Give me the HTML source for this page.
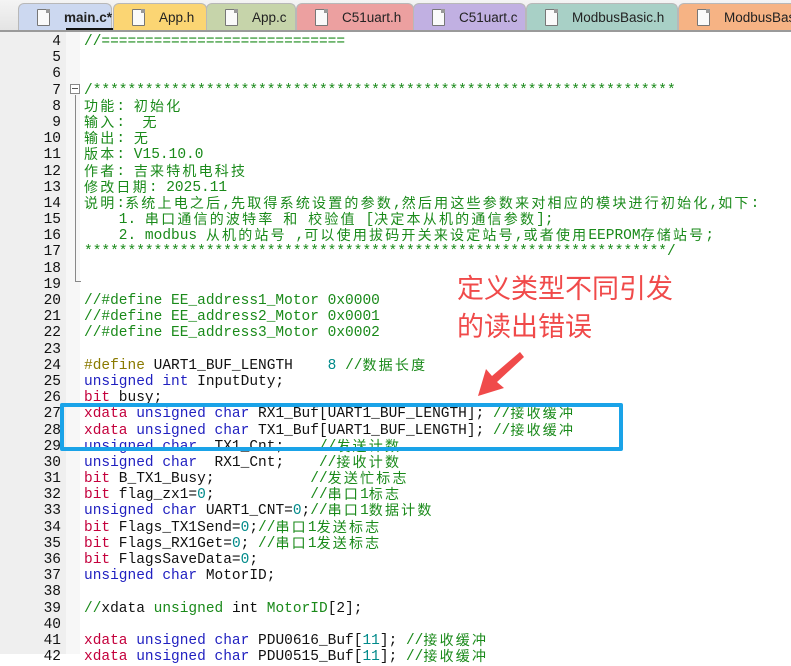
<!DOCTYPE html>
<html><head><meta charset="utf-8">
<style>
*{margin:0;padding:0;box-sizing:border-box}
body{width:791px;height:654px;overflow:hidden;background:#fff;position:relative;font-family:"Liberation Mono","Noto Sans CJK SC",monospace}
#tabs{position:absolute;left:0;top:0;width:791px;height:32px;background:linear-gradient(#f4f4f4,#e4e4e4);border-bottom:2px solid #9a9a9a}
.tab{position:absolute;top:3px;height:27px;border-radius:6px 6px 0 0;font-family:"Liberation Sans",sans-serif;font-size:13.5px;color:#222;line-height:27px;padding-left:45px;border:1px solid #b8b8b8;border-bottom:none}
.tab .ic{position:absolute;left:18px;top:5px;width:13px;height:17px;background:#fafafa;border:1px solid #777;border-radius:1px}
.tab .ic:after{content:"";position:absolute;right:-1px;top:-1px;width:4px;height:4px;background:#999}
#gut{position:absolute;left:0;top:32px;width:66px;height:622px;background:#efefef}
#fold{position:absolute;left:66px;top:32px;width:14px;height:622px;background:#f7f7f7}
#nums{position:absolute;left:0;top:34px;width:61px;text-align:right;font-size:14.5px;color:#111}
#code{position:absolute;left:84px;top:34px;font-size:14.5px;color:#111}
#nums div,#code div{height:16.2px;line-height:16px;white-space:pre;overflow:visible}
.g{color:#1a8a1a}.k{color:#1f1fc0}.r{color:#c4003c}.d{color:#8a7a00}.n{color:#008a8a}
i{font-style:normal;font-family:"Noto Sans CJK SC",sans-serif;font-size:14px;letter-spacing:2.2px;line-height:14px;vertical-align:-1px}
#box{position:absolute;left:60px;top:403px;width:563px;height:48px;border:4px solid #1aa3e8;border-radius:2px}
#note{position:absolute;left:457px;top:268px;font-family:"Noto Sans CJK SC",sans-serif;font-size:27px;line-height:38px;color:#f04a4a}
</style></head><body>
<div id="tabs">
<div class="tab" style="left:18px;width:94px;background:#ccd8f0;font-weight:bold"><span class="ic"></span>main.c*<div style="position:absolute;left:47px;top:24px;width:58px;height:2px;background:#111"></div></div>
<div class="tab" style="left:113px;width:94px;background:#fbd573"><span class="ic"></span>App.h</div>
<div class="tab" style="left:206px;width:90px;background:#c6d4aa"><span class="ic"></span>App.c</div>
<div class="tab" style="left:296px;width:118px;background:#eca0a0"><span class="ic"></span>C51uart.h</div>
<div class="tab" style="left:413px;width:113px;background:#c1b0e2"><span class="ic"></span>C51uart.c</div>
<div class="tab" style="left:526px;width:152px;background:#a8d0c6"><span class="ic"></span>ModbusBasic.h</div>
<div class="tab" style="left:678px;width:120px;background:#f6b384"><span class="ic"></span>ModbusBas</div>
</div>
<div id="gut"></div><div id="fold"></div>
<div style="position:absolute;left:70px;top:84px;width:10px;height:10px;border:1px solid #888;background:#fff"></div>
<div style="position:absolute;left:72px;top:88px;width:6px;height:1px;background:#555"></div>
<div style="position:absolute;left:75px;top:95px;width:1px;height:187px;background:#888"></div>
<div style="position:absolute;left:75px;top:281px;width:6px;height:1px;background:#888"></div>

<div id="nums"><div>4</div><div>5</div><div>6</div><div>7</div><div>8</div><div>9</div><div>10</div><div>11</div><div>12</div><div>13</div><div>14</div><div>15</div><div>16</div><div>17</div><div>18</div><div>19</div><div>20</div><div>21</div><div>22</div><div>23</div><div>24</div><div>25</div><div>26</div><div>27</div><div>28</div><div>29</div><div>30</div><div>31</div><div>32</div><div>33</div><div>34</div><div>35</div><div>36</div><div>37</div><div>38</div><div>39</div><div>40</div><div>41</div><div>42</div></div>

<div id="code">
<div class="g">//============================</div>
<div> </div>
<div> </div>
<div class="g">/*******************************************************************</div>
<div class="g"><i>功能</i>: <i>初始化</i></div>
<div class="g"><i>输入</i>:  <i>无</i></div>
<div class="g"><i>输出</i>: <i>无</i></div>
<div class="g"><i>版本</i>: V15.10.0</div>
<div class="g"><i>作者</i>: <i>吉来特机电科技</i></div>
<div class="g"><i>修改日期</i>: 2025.11</div>
<div class="g"><i>说明</i>:<i>系统上电之后</i>,<i>先取得系统设置的参数</i>,<i>然后用这些参数来对相应的模块进行初始化</i>,<i>如下</i>:</div>
<div class="g">    1. <i>串口通信的波特率</i> <i>和</i> <i>校验值</i> [<i>决定本从机的通信参数</i>];</div>
<div class="g">    2. modbus <i>从机的站号</i> ,<i>可以使用拔码开关来设定站号</i>,<i>或者使用</i>EEPROM<i>存储站号</i>;</div>
<div class="g">*******************************************************************/</div>
<div> </div>
<div> </div>
<div class="g">//#define EE_address1_Motor 0x0000</div>
<div class="g">//#define EE_address2_Motor 0x0001</div>
<div class="g">//#define EE_address3_Motor 0x0002</div>
<div> </div>
<div><span class="d">#define</span> UART1_BUF_LENGTH    <span class="n">8</span> <span class="g">//<i>数据长度</i></span></div>
<div><span class="k">unsigned int</span> InputDuty;</div>
<div><span class="r">bit</span> busy;</div>
<div><span class="r">xdata</span> <span class="k">unsigned char</span> RX1_Buf[UART1_BUF_LENGTH]; <span class="g">//<i>接收缓冲</i></span></div>
<div><span class="r">xdata</span> <span class="k">unsigned char</span> TX1_Buf[UART1_BUF_LENGTH]; <span class="g">//<i>接收缓冲</i></span></div>
<div><span class="k">unsigned char</span>  TX1_Cnt;    <span class="g">//<i>发送计数</i></span></div>
<div><span class="k">unsigned char</span>  RX1_Cnt;    <span class="g">//<i>接收计数</i></span></div>
<div><span class="r">bit</span> B_TX1_Busy;           <span class="g">//<i>发送忙标志</i></span></div>
<div><span class="r">bit</span> flag_zx1=<span class="n">0</span>;           <span class="g">//<i>串口</i>1<i>标志</i></span></div>
<div><span class="k">unsigned char</span> UART1_CNT=<span class="n">0</span>;<span class="g">//<i>串口</i>1<i>数据计数</i></span></div>
<div><span class="r">bit</span> Flags_TX1Send=<span class="n">0</span>;<span class="g">//<i>串口</i>1<i>发送标志</i></span></div>
<div><span class="r">bit</span> Flags_RX1Get=<span class="n">0</span>; <span class="g">//<i>串口</i>1<i>发送标志</i></span></div>
<div><span class="r">bit</span> FlagsSaveData=<span class="n">0</span>;</div>
<div><span class="k">unsigned char</span> MotorID;</div>
<div> </div>
<div><span class="g">//</span>xdata <span class="g">unsigned</span> int <span class="g">MotorID</span>[2];</div>
<div> </div>
<div><span class="r">xdata</span> <span class="k">unsigned char</span> PDU0616_Buf[<span class="n">11</span>]; <span class="g">//<i>接收缓冲</i></span></div>
<div><span class="r">xdata</span> <span class="k">unsigned char</span> PDU0515_Buf[<span class="n">11</span>]; <span class="g">//<i>接收缓冲</i></span></div>
</div>

<div id="box"></div>
<div id="note">定义类型不同引发<br>的读出错误</div>
<svg style="position:absolute;left:0;top:0" width="791" height="654">
<path d="M520 352 L492 376 L486 369 L478 396 L504 388 L497 382 L524 357 Z" fill="#f04a4a"/>
</svg>
</body></html>
